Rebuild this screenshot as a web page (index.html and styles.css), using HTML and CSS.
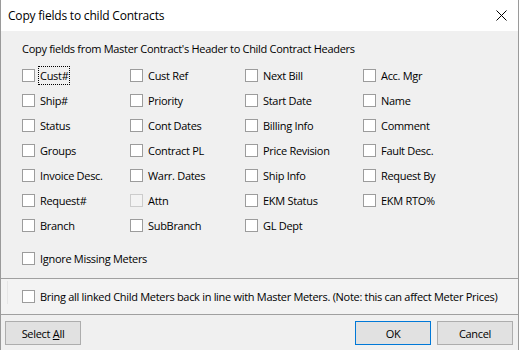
FILE: index.html
```html
<!DOCTYPE html>
<html lang="en">
<head>
    <meta charset="UTF-8">
    <title>Copy fields to child Contracts</title>
    <link rel="stylesheet" href="styles.css">
</head>
<body>
    <div class="dialog">
        <div class="titlebar">
            <span class="title">Copy fields to child Contracts</span>
            <span class="close">
                <svg width="11" height="11" viewBox="0 0 11 11"><path d="M0.5 0.5 L10.5 10.5 M10.5 0.5 L0.5 10.5" stroke="#000" stroke-width="1" fill="none"/></svg>
            </span>
        </div>

        <div class="content">
            <p class="intro">Copy fields from Master Contract's Header to Child Contract Headers</p>

            <div class="field-grid">
                <label class="field"><span class="box"></span><span class="text focused">Cust#</span></label>
                <label class="field"><span class="box"></span><span class="text">Cust Ref</span></label>
                <label class="field"><span class="box"></span><span class="text">Next Bill</span></label>
                <label class="field"><span class="box"></span><span class="text">Acc. Mgr</span></label>

                <label class="field"><span class="box"></span><span class="text">Ship#</span></label>
                <label class="field"><span class="box"></span><span class="text">Priority</span></label>
                <label class="field"><span class="box"></span><span class="text">Start Date</span></label>
                <label class="field"><span class="box"></span><span class="text">Name</span></label>

                <label class="field"><span class="box"></span><span class="text">Status</span></label>
                <label class="field"><span class="box"></span><span class="text">Cont Dates</span></label>
                <label class="field"><span class="box"></span><span class="text">Billing Info</span></label>
                <label class="field"><span class="box"></span><span class="text">Comment</span></label>

                <label class="field"><span class="box"></span><span class="text">Groups</span></label>
                <label class="field"><span class="box"></span><span class="text">Contract PL</span></label>
                <label class="field"><span class="box"></span><span class="text">Price Revision</span></label>
                <label class="field"><span class="box"></span><span class="text">Fault Desc.</span></label>

                <label class="field"><span class="box"></span><span class="text">Invoice Desc.</span></label>
                <label class="field"><span class="box"></span><span class="text">Warr. Dates</span></label>
                <label class="field"><span class="box"></span><span class="text">Ship Info</span></label>
                <label class="field"><span class="box"></span><span class="text">Request By</span></label>

                <label class="field"><span class="box"></span><span class="text">Request#</span></label>
                <label class="field disabled"><span class="box"></span><span class="text">Attn</span></label>
                <label class="field"><span class="box"></span><span class="text">EKM Status</span></label>
                <label class="field"><span class="box"></span><span class="text">EKM RTO%</span></label>

                <label class="field"><span class="box"></span><span class="text">Branch</span></label>
                <label class="field"><span class="box"></span><span class="text">SubBranch</span></label>
                <label class="field"><span class="box"></span><span class="text">GL Dept</span></label>
            </div>

            <label class="field ignore"><span class="box"></span><span class="text">Ignore Missing Meters</span></label>
        </div>

        <div class="sync-strip">
            <label class="field"><span class="box"></span><span class="text">Bring all linked Child Meters back in line with Master Meters. (Note: this can affect Meter Prices)</span></label>
        </div>

        <div class="button-bar">
            <button class="btn">Select <u>A</u>ll</button>
            <div class="right-buttons">
                <button class="btn default">OK</button>
                <button class="btn">Cancel</button>
            </div>
        </div>
    </div>
</body>
</html>
```

FILE: styles.css
```css
body {
    margin: 0;
    padding: 0;
    font-family: "Open Sans", "Noto Sans", sans-serif;
    font-size: 11px;
    letter-spacing: -0.3px;
    color: #000;
    background-color: #f0f0f0;
}

.dialog {
    width: 519px;
    height: 350px;
    box-sizing: border-box;
    border-left: 1px solid #9a9a9a;
    border-right: 1px solid #9a9a9a;
    background-color: #f0f0f0;
    display: flex;
    flex-direction: column;
}

.titlebar {
    height: 31px;
    flex: none;
    background-color: #fff;
    display: flex;
    align-items: center;
    justify-content: space-between;
    padding: 0 10px 0 7px;
}

.title {
    font-size: 12px;
    letter-spacing: -0.2px;
}

.close {
    display: flex;
    margin-right: 1px;
}

.content {
    height: 247px;
    flex: none;
    box-sizing: border-box;
    padding: 10px 0 0 21px;
}

.intro {
    margin: 0 0 7px 0;
    line-height: 15px;
}

.field-grid {
    display: grid;
    grid-template-columns: 108px 115px 118px auto;
    grid-auto-rows: 25px;
}

.field {
    display: flex;
    align-items: center;
    gap: 5px;
    height: 25px;
}

.box {
    width: 11px;
    height: 11px;
    flex: none;
    border: 1px solid #9c9c9c;
    background-color: #fff;
}

.text {
    line-height: 15px;
    padding: 1px 1px;
    margin-left: -1px;
    white-space: nowrap;
}

.text.focused {
    outline: 1px dotted #000;
    outline-offset: 0;
}

.field.disabled .box {
    border-color: #cccccc;
    background-color: #f3f3f3;
}

.field.ignore {
    margin-top: 8px;
}

.sync-strip {
    height: 37px;
    flex: none;
    box-sizing: border-box;
    border-top: 1px solid #a0a0a0;
    border-bottom: 1px solid #a0a0a0;
    background-color: #f3f3f3;
    display: flex;
    align-items: center;
    padding-left: 21px;
    position: relative;
}

.sync-strip::before {
    content: "";
    position: absolute;
    left: 6px;
    top: 2px;
    bottom: 10px;
    width: 1px;
    background-color: #e6e6e6;
}

.button-bar {
    display: flex;
    justify-content: space-between;
    padding: 6px 5px 0 4px;
}

.right-buttons {
    display: flex;
    gap: 6px;
}

.btn {
    width: 76px;
    height: 24px;
    box-sizing: border-box;
    border: 1px solid #adadad;
    background-color: #e1e1e1;
    font-family: "Open Sans", "Noto Sans", sans-serif;
    font-size: 11px;
    letter-spacing: -0.3px;
    color: #000;
    padding: 0;
}

.btn.default {
    border-color: #0078d7;
}
```
